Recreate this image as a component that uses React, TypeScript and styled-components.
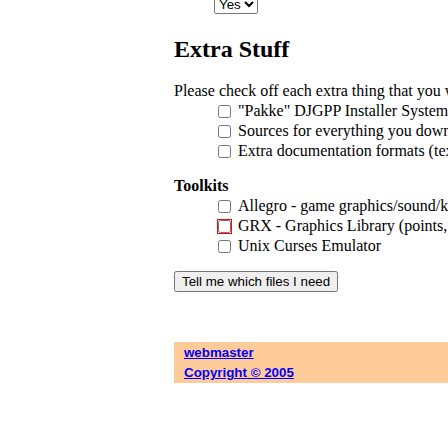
import React from "react";
import styled, { createGlobalStyle } from "styled-components";

const Global = createGlobalStyle`
  html, body {
    margin: 0;
    padding: 0;
    overflow: hidden;
    background: #ffffff;
  }
  body {
    font-family: "Liberation Serif", "Times New Roman", serif;
    font-size: 16px;
    color: #000000;
  }
`;

const Layout = styled.div`
  display: grid;
  grid-template-columns: 174px 720px;
  margin-top: -5px;
`;

const Sidebar = styled.aside`
  background: #ffffff;
`;

const Main = styled.main`
  display: flex;
  flex-direction: column;
  align-items: flex-start;
  width: 720px;
`;

const SelectRow = styled.div`
  display: flex;
  height: 19px;
  padding-left: 40px;
`;

const Select = styled.select`
  font-family: "Liberation Sans", Arial, sans-serif;
  font-size: 13.33px;
  margin: 0;
`;

const Heading = styled.h2`
  font-family: "Liberation Serif", "Times New Roman", serif;
  font-size: 24px;
  font-weight: bold;
  margin: 22px 0 18px;
  line-height: normal;
`;

const Group = styled.div<{ $gap?: number }>`
  display: flex;
  flex-direction: column;
  margin-top: ${(p) => p.$gap ?? 0}px;
`;

const Line = styled.div<{ $bold?: boolean }>`
  height: 20px;
  line-height: 20px;
  white-space: nowrap;
  font-weight: ${(p) => (p.$bold ? "bold" : "normal")};
`;

const OptionRow = styled.label`
  display: flex;
  align-items: center;
  height: 20px;
  line-height: 20px;
  padding-left: 40px;
  white-space: nowrap;
`;

const Check = styled.input<{ $invalid?: boolean }>`
  width: 13px;
  height: 13px;
  margin: 0 7px 0 4px;
  outline: ${(p) => (p.$invalid ? "1px solid #ff0000" : "none")};
  outline-offset: 0;
`;

const Submit = styled.button`
  font-family: "Liberation Sans", Arial, sans-serif;
  font-size: 13.33px;
  margin-top: 15px;
`;

const Footer = styled.footer`
  align-self: stretch;
  margin-top: 50px;
  background: #ffcc99;
  padding: 1px 10px 0;
  display: flex;
  flex-direction: column;
  align-items: flex-start;
`;

const FooterLink = styled.a`
  font-family: "Liberation Sans", Arial, sans-serif;
  font-size: 13.33px;
  font-weight: bold;
  line-height: 20px;
  color: #0000ff;
  text-decoration: underline;
`;

const extras = [
  { label: '"Pakke" DJGPP Installer System' },
  { label: "Sources for everything you download" },
  { label: "Extra documentation formats (texinfo, HTML, PDF)" },
];

const toolkits = [
  { label: "Allegro - game graphics/sound/keyboard/mouse library", invalid: false },
  { label: "GRX - Graphics Library (points, lines, shapes, text)", invalid: true },
  { label: "Unix Curses Emulator", invalid: false },
];

export default function App() {
  return (
    <>
      <Global />
      <Layout>
        <Sidebar />
        <Main>
          <SelectRow>
            <Select defaultValue="yes">
              <option value="yes">Yes</option>
              <option value="no">No</option>
            </Select>
          </SelectRow>
          <Heading>Extra Stuff</Heading>
          <Group>
            <Line>Please check off each extra thing that you want.</Line>
            {extras.map((e) => (
              <OptionRow key={e.label}>
                <Check type="checkbox" />
                {e.label}
              </OptionRow>
            ))}
          </Group>
          <Group $gap={15}>
            <Line $bold>Toolkits</Line>
            {toolkits.map((t) => (
              <OptionRow key={t.label}>
                <Check type="checkbox" $invalid={t.invalid} />
                {t.label}
              </OptionRow>
            ))}
          </Group>
          <Submit type="button">Tell me which files I need</Submit>
          <Footer>
            <FooterLink href="#webmaster">webmaster</FooterLink>
            <FooterLink href="#copyright">Copyright © 2005</FooterLink>
          </Footer>
        </Main>
      </Layout>
    </>
  );
}
